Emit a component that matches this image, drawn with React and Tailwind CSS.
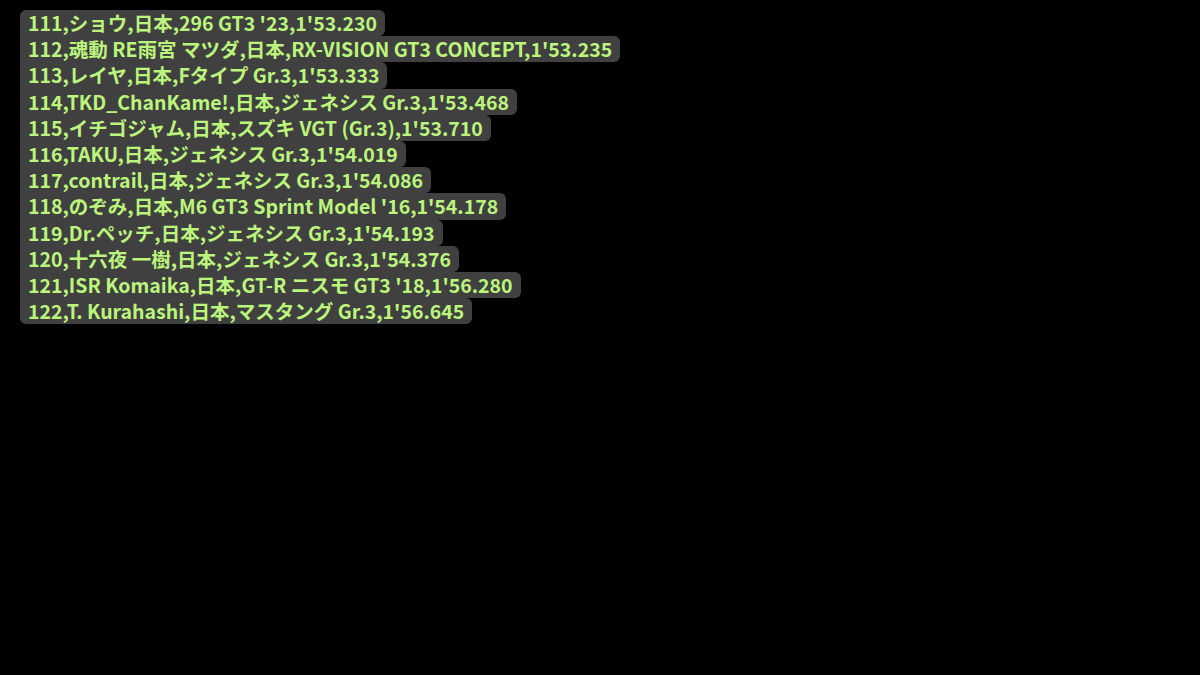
import React from "react";

const lines = [
  "111,ショウ,日本,296 GT3 '23,1'53.230",
  "112,魂動 RE雨宮 マツダ,日本,RX-VISION GT3 CONCEPT,1'53.235",
  "113,レイヤ,日本,Fタイプ Gr.3,1'53.333",
  "114,TKD_ChanKame!,日本,ジェネシス Gr.3,1'53.468",
  "115,イチゴジャム,日本,スズキ VGT (Gr.3),1'53.710",
  "116,TAKU,日本,ジェネシス Gr.3,1'54.019",
  "117,contrail,日本,ジェネシス Gr.3,1'54.086",
  "118,のぞみ,日本,M6 GT3 Sprint Model '16,1'54.178",
  "119,Dr.ペッチ,日本,ジェネシス Gr.3,1'54.193",
  "120,十六夜 一樹,日本,ジェネシス Gr.3,1'54.376",
  "121,ISR Komaika,日本,GT-R ニスモ GT3 '18,1'56.280",
  "122,T. Kurahashi,日本,マスタング Gr.3,1'56.645",
];

function App() {
  return (
    <div className="min-h-screen bg-black pt-[10px] pl-[20px]">
      <div className="flex flex-col items-start font-['Noto_Sans_CJK_JP','Noto_Sans',sans-serif] font-bold text-[19.5px] leading-[26.2px] text-[#bcf57c]">
        {lines.map((line, index) => (
          <div
            key={index}
            className={
              "bg-[#404040] px-2 whitespace-pre rounded-r-md " +
              (index === 0 ? "rounded-tl-md " : "") +
              (index === lines.length - 1 ? "rounded-bl-md" : "")
            }
          >
            {line}
          </div>
        ))}
      </div>
    </div>
  );
}

export default App;
